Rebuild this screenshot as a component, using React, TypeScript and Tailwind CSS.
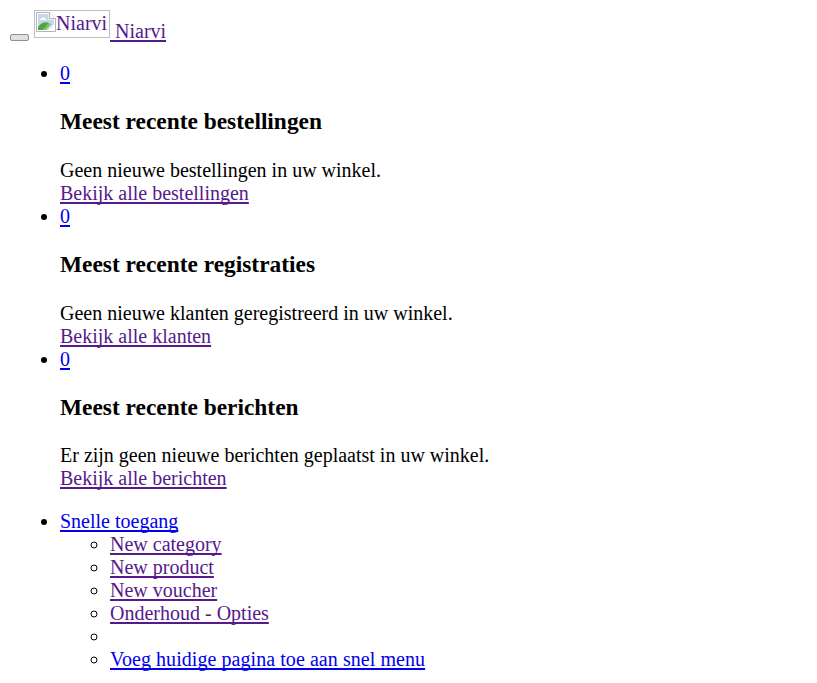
const visited = "text-[#551a8b] underline decoration-2 underline-offset-2 [text-decoration-skip-ink:none]";
const fresh = "text-[#0000ee] underline decoration-2 underline-offset-2 [text-decoration-skip-ink:none]";

const panels = [
  {
    title: "Meest recente bestellingen",
    body: "Geen nieuwe bestellingen in uw winkel.",
    link: "Bekijk alle bestellingen",
  },
  {
    title: "Meest recente registraties",
    body: "Geen nieuwe klanten geregistreerd in uw winkel.",
    link: "Bekijk alle klanten",
  },
  {
    title: "Meest recente berichten",
    body: "Er zijn geen nieuwe berichten geplaatst in uw winkel.",
    link: "Bekijk alle berichten",
  },
];

const quickLinks = ["New category", "New product", "New voucher", "Onderhoud - Opties"];

function BrokenImage() {
  return (
    <svg width="20" height="20" viewBox="0 0 20 20" className="inline-block align-[-2px]">
      <path d="M0.5 0.5H13.5L19.5 6.5V19.5H0.5Z" fill="#fff" stroke="#b4b4b4" />
      <path d="M2 2H12.5V7.5H18V12L12 18H2Z" fill="#c6d8ee" />
      <path d="M6 6C8 5 10 6 10 8H4C4 7 5 6 6 6Z" fill="#fff" />
      <path d="M2 18V15C5 11 9 9 13 11L7 18Z" fill="#4fa53a" />
      <path d="M13 11L15 12L10 18H7Z" fill="#7fbf5f" />
      <path d="M13.5 0.5V6.5H19.5" fill="#fff" stroke="#b4b4b4" />
    </svg>
  );
}

export default function App() {
  return (
    <div className="min-h-screen bg-white font-['Liberation_Serif',serif] text-[20px] leading-[23px] text-black">
      <div className="pl-[10px] pt-[10px] h-[42px] whitespace-nowrap">
        <button className="inline-block w-[19px] h-[7px] align-[-2px] rounded-[2px] border border-[#8f8f8f] bg-[#e0e0e0]"></button>{" "}
        <a href="#" className={visited}>
          <span className="inline-block overflow-hidden w-[76px] h-[28px] pl-[1px] pt-[1px] border border-[#c0c0c0]">
            <BrokenImage />
            Niarvi
          </span>{" "}
          Niarvi
        </a>
      </div>

      <ul className="list-disc pl-[60px] mt-[20px] mb-[20px]">
        {panels.map((panel) => (
          <li key={panel.title}>
            <a href="#" className={fresh}>0</a>
            <h3 className="text-[23.4px] leading-[27px] font-bold my-[23.4px]">{panel.title}</h3>
            <div>{panel.body}</div>
            <a href="#" className={visited}>{panel.link}</a>
          </li>
        ))}
      </ul>

      <ul className="list-disc pl-[60px]">
        <li>
          <a href="#" className={fresh}>Snelle toegang</a>
          <ul className="list-[circle] pl-[50px]">
            {quickLinks.map((label) => (
              <li key={label}>
                <a href="#" className={visited}>{label}</a>
              </li>
            ))}
            <li>&nbsp;</li>
            <li>
              <a href="#" className={`${fresh} tracking-[0.06px]`}>Voeg huidige pagina toe aan snel menu</a>
            </li>
          </ul>
        </li>
      </ul>
    </div>
  );
}
